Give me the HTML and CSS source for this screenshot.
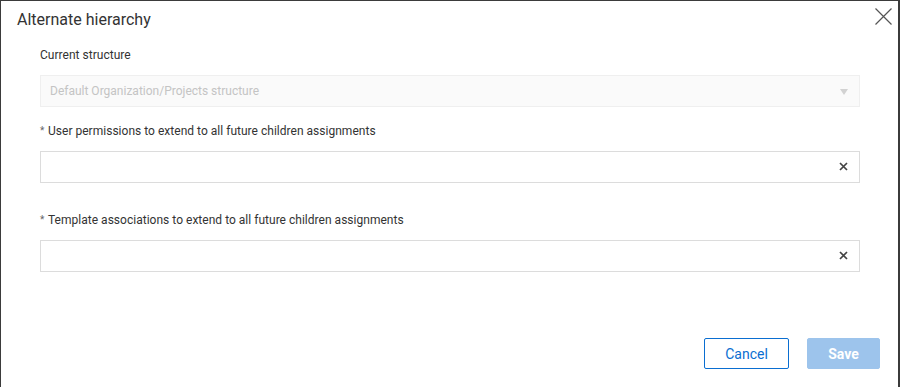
FILE: index.html
```html
<!DOCTYPE html>
<html lang="en">
<head>
<meta charset="utf-8">
<title>Alternate hierarchy</title>
<link rel="stylesheet" href="styles.css">
</head>
<body>
<div class="modal">
  <div class="modal-header">
    <h1 class="modal-title">Alternate hierarchy</h1>
    <button class="close-btn" aria-label="Close">
      <svg width="17" height="17" viewBox="0 0 17 17"><path d="M0.5 0.5L16.5 16.5M16.5 0.5L0.5 16.5" stroke="#555" stroke-width="1.2" fill="none"/></svg>
    </button>
  </div>
  <div class="modal-body">
    <div class="field first">
      <div class="label">Current structure</div>
      <div class="select disabled">
        <span class="placeholder">Default Organization/Projects structure</span>
        <svg class="caret" width="8" height="6" viewBox="0 0 8 6"><path d="M0 0H8L4 6Z" fill="#d2d2d2"/></svg>
      </div>
    </div>
    <div class="field">
      <div class="label"><span class="req">*</span>User permissions to extend to all future children assignments</div>
      <div class="select">
        <span class="placeholder"></span>
        <svg class="clear" width="9" height="9" viewBox="0 0 9 9"><path d="M1 1L8 8M8 1L1 8" stroke="#444" stroke-width="1.7" fill="none"/></svg>
      </div>
    </div>
    <div class="field spaced">
      <div class="label"><span class="req">*</span>Template associations to extend to all future children assignments</div>
      <div class="select">
        <span class="placeholder"></span>
        <svg class="clear" width="9" height="9" viewBox="0 0 9 9"><path d="M1 1L8 8M8 1L1 8" stroke="#444" stroke-width="1.7" fill="none"/></svg>
      </div>
    </div>
  </div>
  <div class="modal-footer">
    <button class="btn btn-secondary">Cancel</button>
    <button class="btn btn-primary" disabled>Save</button>
  </div>
</div>
</body>
</html>
```
FILE: styles.css
```css
html, body {
  margin: 0;
  padding: 0;
}
body {
  background: #3b3b3b;
  width: 900px;
  height: 387px;
  overflow: hidden;
  font-family: Roboto, "Liberation Sans", sans-serif;
  color: #333;
}
.modal {
  margin: 1px 2px 0 1px;
  height: 386px;
  background: #fff;
  display: flex;
  flex-direction: column;
}
.modal-header {
  display: flex;
  justify-content: space-between;
  align-items: flex-start;
  padding: 8px 6px 0 16px;
}
.modal-title {
  margin: 0;
  font-size: 16px;
  font-weight: 400;
  line-height: 22px;
  color: #333;
}
.close-btn {
  border: 0;
  background: none;
  padding: 0;
  margin-top: -1px;
  width: 17px;
  height: 17px;
  display: flex;
}
.modal-body {
  padding: 0 38px 0 39px;
  display: flex;
  flex-direction: column;
}
.field {
  display: flex;
  flex-direction: column;
  gap: 12px;
  margin-top: 16px;
}
.field.spaced {
  margin-top: 29px;
}
.label {
  font-size: 12px;
  line-height: 16px;
  height: 16px;
  color: #333;
  letter-spacing: 0.02px;
}
.req {
  display: inline-block;
  vertical-align: top;
  height: 16px;
  line-height: 16px;
  color: #666;
  font-size: 10px;
  width: 8px;
}
.select {
  box-sizing: border-box;
  width: 820px;
  height: 32px;
  border: 1px solid #dcdcdc;
  background: #fff;
  display: flex;
  align-items: center;
  justify-content: space-between;
  padding: 0 11px 0 9px;
}
.select.disabled {
  background: #fafafa;
  border-color: #efefef;
}
.placeholder {
  font-size: 12px;
  color: #c4c4c4;
}
.caret {
  margin-top: 1px;
}
.clear {
  margin-top: -1px;
}
.modal-footer {
  margin-top: auto;
  display: flex;
  justify-content: flex-end;
  gap: 18px;
  padding: 0 18px 18px 0;
}
.btn {
  box-sizing: border-box;
  height: 31px;
  font-family: Roboto, "Liberation Sans", sans-serif;
  font-size: 14px;
  border-radius: 2px;
  padding: 0;
}
.btn-secondary {
  width: 85px;
  background: #fff;
  border: 1px solid #0a6ed1;
  color: #0a6ed1;
}
.btn-primary {
  width: 73px;
  background: #9dc4ec;
  border: 1px solid #9dc4ec;
  color: #fff;
  font-weight: 700;
}
```
